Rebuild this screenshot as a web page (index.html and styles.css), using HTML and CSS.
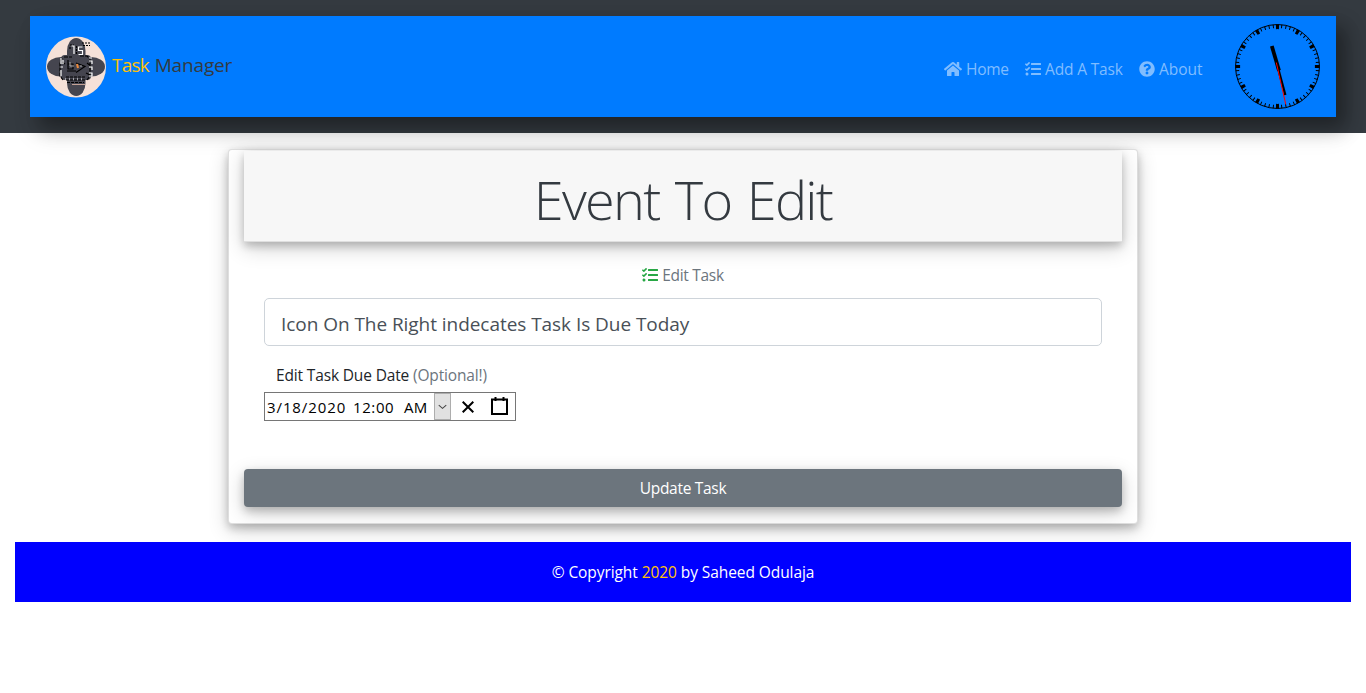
FILE: index.html
```html
<!DOCTYPE html>
<html lang="en">
<head>
<meta charset="utf-8">
<title>Task Manager</title>
<link rel="stylesheet" href="styles.css">
</head>
<body>
<svg class="defs" width="0" height="0" aria-hidden="true">
  <symbol id="tasks" viewBox="0 0 512 512"><path d="M139.61 35.5a12 12 0 0 0-17 0L58.93 98.81l-22.7-22.12a12 12 0 0 0-17 0L3.53 92.41a12 12 0 0 0 0 17l47.59 47.4a12.78 12.78 0 0 0 17.61 0l15.59-15.62L156.52 69a12.09 12.09 0 0 0 .09-17zm0 159.19a12 12 0 0 0-17 0l-63.68 63.72-22.7-22.1a12 12 0 0 0-17 0L3.53 252a12 12 0 0 0 0 17L51 316.5a12.77 12.77 0 0 0 17.6 0l15.7-15.69 72.2-72.22a12 12 0 0 0 .09-16.9zM64 368c-26.49 0-48.59 21.5-48.59 48S37.53 464 64 464a48 48 0 0 0 0-96zm432 16H208a16 16 0 0 0-16 16v32a16 16 0 0 0 16 16h288a16 16 0 0 0 16-16v-32a16 16 0 0 0-16-16zm0-320H208a16 16 0 0 0-16 16v32a16 16 0 0 0 16 16h288a16 16 0 0 0 16-16V80a16 16 0 0 0-16-16zm0 160H208a16 16 0 0 0-16 16v32a16 16 0 0 0 16 16h288a16 16 0 0 0 16-16v-32a16 16 0 0 0-16-16z"/></symbol>
</svg>
<header class="top">
  <nav class="navbar">
    <a class="brand">
      <svg class="logo" viewBox="0 0 60 62">
        <ellipse cx="30" cy="31" rx="30" ry="30.5" fill="#f5e1d8"/>
        <g fill="#45454f"><rect x="21" y="2" width="18.500" height="58" rx="9.250" ry="13"/><rect x="1" y="21" width="58" height="19.500" rx="14" ry="9.750"/><rect x="15" y="19" width="30" height="25" rx="4"/></g>
        <g fill="none" stroke="#000" stroke-width="1.200">
          <path d="M18 21h8M16 22l-2 4v14l3 4M34 20h7l3 3v17l-3 4M16 26l3 2M41 27l4 3M40 37l4 2" stroke-dasharray="4 1"/>
          <path d="M24 9h4M24 11v3M30.500 10v8M36 7h8M37 9.500h7" stroke-dasharray="2 1"/>
          <path d="M22 24v9h5v-5h-5M30 27l9 3.500-9 6M21 35h9"/>
          <path d="M20 41h20M20 44h20M21 46.500h17" stroke-dasharray="3 1"/>
        </g>
        <g fill="none" stroke="#fff" stroke-width="1.200">
          <path d="M25.500 10h2.500v8M36.500 11h-4v3.500h4v4h-4"/>
          <path d="M15 22v6M17 24v4M14.500 31h2.500M15 34v6M43 22h3M43 25h3v3M43 31h3v3M43 37h3v3h-3"/>
          <path d="M19 43h20" stroke-dasharray="1 3"/>
        </g>
        <path d="M24 26v4h4M34 30h2" stroke="#aaa" fill="none"/>
        <path d="M31 28l1 4" stroke="#ed8b3e" stroke-width="2"/>
        <path d="M26 48.500h13" stroke="#c6a397"/>
      </svg>
      <span class="brand-name"><span class="gold">Task</span> Manager</span>
    </a>
    <div class="nav-right">
      <a class="link home"><svg class="icon-home" viewBox="0 0 576 512"><path d="M280.370 148.260L96 300.110V464a16 16 0 0 0 16 16l112.060-.29a16 16 0 0 0 15.920-16V368a16 16 0 0 1 16-16h64a16 16 0 0 1 16 16v95.640a16 16 0 0 0 16 16.050L464 480a16 16 0 0 0 16-16V300L295.670 148.260a12.190 12.190 0 0 0-15.300 0zM571.600 251.470L488 182.560V44.050a12 12 0 0 0-12-12h-56a12 12 0 0 0-12 12v72.610L318.470 43a48 48 0 0 0-61 0L4.340 251.470a12 12 0 0 0-1.600 16.900l25.500 31A12 12 0 0 0 45.150 301l235.220-193.740a12.190 12.190 0 0 1 15.300 0L530.900 301a12 12 0 0 0 16.900-1.600l25.500-31a12 12 0 0 0-1.700-16.930z"/></svg><span>Home</span></a>
      <a class="link add"><svg class="icon"><use href="#tasks"/></svg><span>Add A Task</span></a>
      <a class="link about"><svg class="icon" viewBox="0 0 512 512"><path d="M504 256c0 136.997-111.043 248-248 248S8 392.997 8 256C8 119.083 119.043 8 256 8s248 111.083 248 248zM262.655 90c-54.497 0-89.255 22.957-116.549 63.758-3.536 5.286-2.353 12.415 2.715 16.258l34.699 26.310c5.205 3.947 12.621 3.008 16.665-2.122 17.864-22.658 30.113-35.797 57.303-35.797 20.429 0 45.698 13.148 45.698 32.958 0 14.976-12.363 22.667-32.534 33.976C247.128 238.528 216 254.941 216 296v4c0 6.627 5.373 12 12 12h56c6.627 0 12-5.373 12-12v-1.333c0-28.462 83.186-29.647 83.186-106.667 0-58.002-60.165-102-116.531-102zM256 338c-25.365 0-46 20.635-46 46 0 25.364 20.635 46 46 46s46-20.636 46-46c0-25.365-20.635-46-46-46z"/></svg><span>About</span></a>
      <svg class="clock" viewBox="-42.5 -42.5 86 86">
        <circle r="42" fill="none" stroke="#000" stroke-width="1"/>
        <circle r="40.250" fill="none" stroke="#000" stroke-width="3.500" pathLength="600" stroke-dasharray="2.400 7.600" stroke-dashoffset="1.200"/>
        <circle r="39.700" fill="none" stroke="#000" stroke-width="4.600" pathLength="120" stroke-dasharray="1.500 8.500" stroke-dashoffset=".75"/>
        <path d="M-5.700-20.500L1.500 4" stroke="#000" stroke-width="3.800"/>
        <path d="M-1-4L7.800 28.500" stroke="#000" stroke-width="2.400"/>
        <path d="M-1.200-4L8.300 38" stroke="#f00" stroke-width="1"/>
      </svg>
    </div>
  </nav>
</header>
<main class="card">
  <div class="card-header"><h1><span>Event To Edit</span></h1></div>
  <form class="body">
    <div class="caption"><svg class="icon"><use href="#tasks"/></svg><span>Edit Task</span></div>
    <div class="field"><span>Icon On The Right indecates Task Is Due Today</span></div>
    <div class="due-label"><span>Edit Task Due Date <em>(Optional!)</em></span></div>
    <div class="date">
      <span class="d">3/18/2020</span><span class="t">12:00</span><span class="m">AM</span>
      <span class="drop"><svg viewBox="0 0 16 26"><path d="M4 11.500l4 3.500 4-3.500" fill="none" stroke="#444" stroke-width="1.100"/></svg></span>
      <svg class="clear" viewBox="0 0 12 12"><path d="M.7.700l10.600 10.600M11.300.700L.7 11.300" stroke="#000" stroke-width="2"/></svg>
      <svg class="cal" viewBox="0 0 17 18"><path d="M1 2.500h15V17H1z" fill="none" stroke="#000" stroke-width="2"/><path d="M4.500 0v4M12.500 0v4" stroke="#000" stroke-width="2"/></svg>
    </div>
  </form>
  <div class="button"><span>Update Task</span></div>
</main>
<footer class="footer"><span>© Copyright <b>2020</b> by Saheed Odulaja</span></footer>
</body>
</html>
```

FILE: styles.css
```css
* { box-sizing: border-box; }
body { margin: 0; background: #fff; color: #212529; font: 15.5px/24px "Open Sans", "Noto Sans", sans-serif; letter-spacing: -0.15px; }
.defs { display: block; }
.top { height: 133px; padding: 16px 30px; background: #343a40; }
.navbar { display: flex; justify-content: space-between; height: 101px; padding: 0 15px 0 16px; background: #007bff; box-shadow: 10px 10px 18px rgba(0,0,0,.33), 6px 16px 24px rgba(0,0,0,.1); }
.brand { display: flex; align-items: center; height: 101px; color: #343a40; font-size: 19px; }
.logo { width: 60px; height: 62px; margin-right: 6px; }
.brand-name { padding-bottom: 4px; letter-spacing: -0.15px; }
.gold { margin-right: 1px; color: #ffc107; letter-spacing: -0.8px; }
.nav-right { display: flex; align-items: center; }
.link { display: flex; align-items: center; gap: 4px; padding-top: 5px; color: #80bdff; white-space: nowrap; }
.home { width: 81px; letter-spacing: -0.25px; }
.add { width: 114px; }
.about { width: 96px; letter-spacing: 0; }
.icon, .icon-home { width: 16px; height: 16px; fill: currentColor; flex: none; }
.icon-home { width: 18px; }
.clock { width: 86px; height: 86px; }
.card { width: 910px; height: 375px; margin: 16px auto 0; padding: 1px 15px 0; background: #fff; border: 1px solid rgba(0,0,0,.125); border-radius: 4px; box-shadow: 0 4px 8px rgba(0,0,0,.2), 0 6px 20px rgba(0,0,0,.19); }
.card-header { height: 91px; background: #f7f7f7; border-bottom: 1px solid #dfdfdf; box-shadow: 0 4px 8px rgba(0,0,0,.2), 0 6px 20px rgba(0,0,0,.19); text-align: center; }
h1 { margin: 0; padding-top: 15px; font-size: 54px; line-height: 67px; font-weight: 300; letter-spacing: -1.7px; word-spacing: 3px; color: #343a40; }
.body { height: 227px; padding: 21px 20px 0; }
.caption { display: flex; justify-content: center; align-items: center; gap: 4px; height: 23px; margin-bottom: 12px; color: #6c757d; }
.caption span { letter-spacing: -0.3px; }
.caption .icon { color: #28a745; }
.field { height: 48px; padding: 10px 16px; border: 1px solid #ced4da; border-radius: 5px; font-size: 19px; line-height: 30px; letter-spacing: -0.05px; color: #495057; }
.due-label { margin: 17px 0 5px 12px; }
em { font-style: normal; color: #6c757d; }
.date { display: flex; align-items: center; width: 252px; height: 29px; padding-left: 2px; border: 1px solid #767676; color: #000; font-size: 15px; letter-spacing: 0.2px; }
.d { width: 86px; letter-spacing: 0.9px; }
.t { width: 51px; letter-spacing: 0.6px; }
.m { width: 30px; }
.drop { width: 17px; height: 27px; background: #e1e1e1; border: 1px solid #adadad; }
.drop svg { display: block; width: 15px; height: 25px; }
.clear { width: 12px; height: 12px; margin-left: 11px; }
.cal { width: 17px; height: 18px; margin: 0 0 2px 17px; }
.button { height: 38px; padding: 7px; text-align: center; background: #6c757d; color: #fff; border-radius: 4px; box-shadow: 0 4px 8px rgba(0,0,0,.2), 0 6px 20px rgba(0,0,0,.19); letter-spacing: -0.3px; }
.footer { position: relative; height: 60px; margin: 18px 15px 0; padding-top: 18px; background: #00f; color: #fff; text-align: center; letter-spacing: -0.08px; }
b { font-weight: 400; color: #ffc107; }
```
